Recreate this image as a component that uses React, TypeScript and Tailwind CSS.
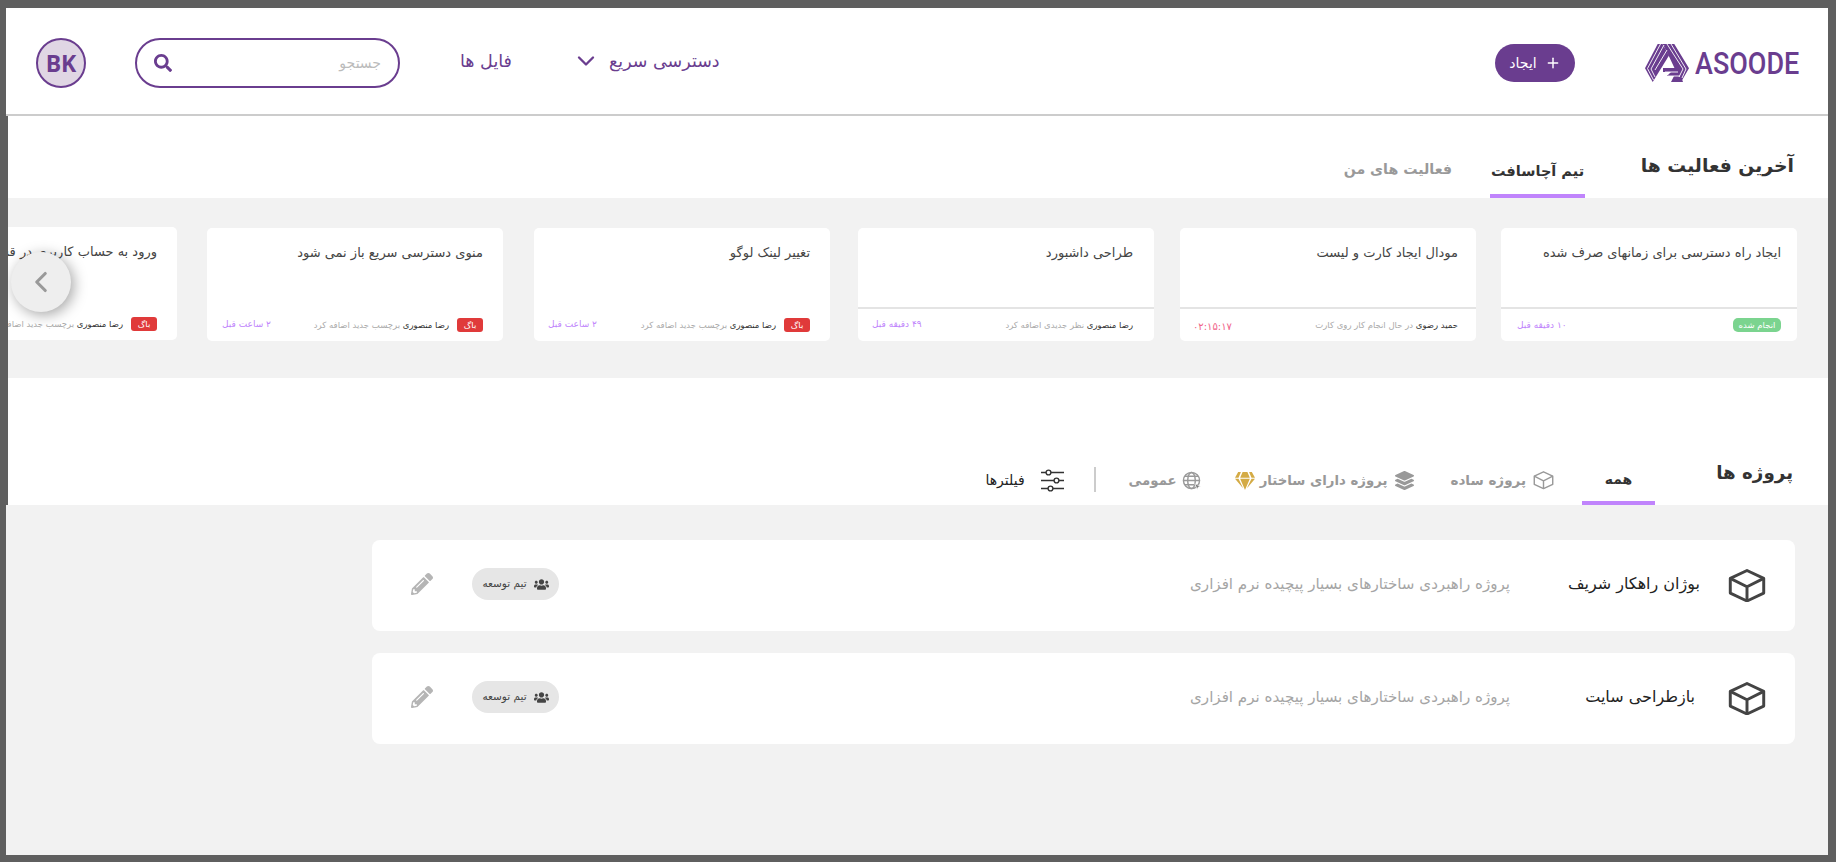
import { FaSearch, FaPencilAlt, FaUsers, FaLayerGroup, FaGem } from "react-icons/fa";
import { ChevronDown, ChevronLeft, Plus } from "lucide-react";

function Logo() {
  return (
    <svg width="44" height="38" viewBox="0 0 44 38" className="shrink-0">
      <path d="M12.7 0H17.5L24 11.5L7.7 38L0 24.3Z" fill="#6a3d8f" />
      <path d="M17.7 0H29.3L44 24.3L36 38L24.3 13Z" fill="#6a3d8f" />
      <path d="M18 24H33L38 38H26L29 32H22L26 28H18Z" fill="#6a3d8f" />
      <g stroke="#fff" strokeWidth="0.9" fill="none">
        <path d="M15.5 0L2.5 24.5L8.5 36" />
        <path d="M19 1L6 25L10 33" />
        <path d="M22 6L10 26" />
        <path d="M22 0L38 25L34 33" />
        <path d="M26 0L41 25L37 34" />
        <path d="M20 28H33M23 32H35" />
      </g>
    </svg>
  );
}

function Cube({ size, color, stroke }: { size: number; color: string; stroke: number }) {
  return (
    <svg width={size} height={size * 0.88} viewBox="0 0 38 34" fill="none" stroke={color} strokeWidth={stroke} strokeLinejoin="round" className="shrink-0">
      <path d="M19 1.5L36 9.5V24.5L19 32.5L2 24.5V9.5Z" />
      <path d="M2 9.5L19 18L36 9.5M19 18V32.5" />
    </svg>
  );
}

function GlobeIcon() {
  return (
    <svg width="19" height="19" viewBox="0 0 20 20" fill="none" stroke="#999" strokeWidth="1.5" className="shrink-0">
      <circle cx="10" cy="10" r="8.5" />
      <ellipse cx="10" cy="10" rx="4" ry="8.5" />
      <path d="M1.5 10H18.5M3 5.5H17M3 14.5H17" />
      <path d="M13.5 13.5L19.5 16L17 17L16 19.5Z" fill="#777" stroke="#fff" strokeWidth="0.7" />
    </svg>
  );
}

function FilterIcon() {
  return (
    <svg width="23" height="23" viewBox="0 0 23 23" fill="none" stroke="#333" strokeWidth="1.4" className="shrink-0">
      <path d="M0 3.5H5M10 3.5H23M0 11.5H13M18 11.5H23M0 19.5H7M12 19.5H23" />
      <circle cx="7.5" cy="3.5" r="2.4" />
      <circle cx="15.5" cy="11.5" r="2.4" />
      <circle cx="9.5" cy="19.5" r="2.4" />
    </svg>
  );
}

type Card = {
  title: string;
  author: string;
  action: string;
  time: string;
  timeClass: string;
  badge?: string;
  badgeClass?: string;
  line: boolean;
  outer: string;
  pad: string;
};

const cards: Card[] = [
  { title: "ایجاد راه دسترسی برای زمانهای صرف شده", author: "", action: "", time: "۱۰ دقیقه قبل", timeClass: "text-[#c084fc] text-[9px] pt-[2px]", badge: "انجام شده", badgeClass: "bg-[#7bd48f] w-[48px] rounded-[5px]", line: true, outer: "", pad: "pr-[16px] pl-[16px]" },
  { title: "مودال ایجاد کارت و لیست", author: "حمید رضوی", action: "در حال انجام کار روی کارت", time: "۰۲:۱۵:۱۷", timeClass: "text-[#f0648a] text-[10px] pt-[2px]", line: true, outer: "mr-[25px]", pad: "pr-[18px] pl-[13px]" },
  { title: "طراحی داشبورد", author: "رضا منصوری", action: "نظر جدیدی اضافه کرد", time: "۴۹ دقیقه قبل", timeClass: "text-[#c084fc] text-[9px]", line: true, outer: "mr-[26px]", pad: "pr-[21px] pl-[14px]" },
  { title: "تغییر لینک لوگو", author: "رضا منصوری", action: "برچسب جدید اضافه کرد", time: "۲ ساعت قبل", timeClass: "text-[#c084fc] text-[9px]", badge: "باگ", badgeClass: "bg-[#e03a3a] w-[26px] rounded-[3px]", line: false, outer: "mr-[28px]", pad: "pr-[20px] pl-[14px]" },
  { title: "منوی دسترسی سریع باز نمی شود", author: "رضا منصوری", action: "برچسب جدید اضافه کرد", time: "۲ ساعت قبل", timeClass: "text-[#c084fc] text-[9px]", badge: "باگ", badgeClass: "bg-[#e03a3a] w-[26px] rounded-[3px]", line: false, outer: "mr-[31px]", pad: "pr-[20px] pl-[15px]" },
  { title: "ورود به حساب کاربری در قسمت مدیریت", author: "رضا منصوری", action: "برچسب جدید اضافه کرد", time: "۲ ساعت قبل", timeClass: "text-[#c084fc] text-[9px]", badge: "باگ", badgeClass: "bg-[#e03a3a] w-[26px] rounded-[3px]", line: false, outer: "mr-[30px] -mt-px", pad: "pr-[20px] pl-[15px]" },
];

function ActivityCard({ c }: { c: Card }) {
  return (
    <div className={`shrink-0 w-[296px] h-[113px] bg-white rounded-[5px] flex flex-col ${c.outer}`}>
      <div className={`h-[79px] pt-[14px] text-[13px] leading-[22px] text-[#444] whitespace-nowrap overflow-hidden ${c.pad}`}>
        {c.title}
      </div>
      <div className={`h-[2px] ${c.line ? "bg-[#e4e4e4]" : "bg-white"}`} />
      <div className={`flex-1 flex items-center justify-between text-[8.5px] whitespace-nowrap overflow-hidden ${c.pad}`}>
        <div className="flex items-center gap-[8px]">
          {c.badge && (
            <span className={`h-[14px] text-white flex items-center justify-center ${c.badgeClass}`}>{c.badge}</span>
          )}
          {c.author && (
            <span className="text-[#aaa]">
              <span className="text-[#333]">{c.author}</span> {c.action}
            </span>
          )}
        </div>
        <span className={c.timeClass}>{c.time}</span>
      </div>
    </div>
  );
}

const projects = [
  { title: "بوژان راهکار شریف", w: "w-[152px]" },
  { title: "بازطراحی سایت", w: "w-[152px] pr-[5px]" },
];

function ProjectRow({ title, w }: { title: string; w: string }) {
  return (
    <div className="h-[91px] bg-white rounded-[8px] flex items-center pr-[29px] pb-[3px]">
      <div className="mt-[3px] flex">
        <Cube size={38} color="#444" stroke={3} />
      </div>
      <div className={`${w} mr-[28px] text-[16px] text-[#222] whitespace-nowrap`}>{title}</div>
      <div className="mr-[38px] w-[320px] text-[15.1px] text-[#a5a5a5] whitespace-nowrap">پروژه راهبردی ساختارهای بسیار پیچیده نرم افزاری</div>
      <div className="mr-[631px] w-[87px] h-[32px] rounded-full bg-[#e6e6e6] flex items-center justify-center gap-[7px] text-[10.5px] text-[#444]">
        <FaUsers size={15} color="#444" />
        <span>تیم توسعه</span>
      </div>
      <div className="mr-[39px]">
        <FaPencilAlt size={22} color="#b5b5b5" />
      </div>
    </div>
  );
}

export default function App() {
  return (
    <div dir="rtl" className="h-[862px] bg-[#5f5f5f] pt-[8px] pb-[7px] pl-[6px] pr-[8px] flex flex-col font-['DejaVu_Sans',sans-serif] overflow-hidden">
      <header className="h-[108px] shrink-0 bg-white border-b-2 border-[#cccccc] flex items-center pr-[29px] text-[#6a3d8f]">
        <div dir="ltr" className="flex items-center gap-[6px] w-[154px] mt-[4px]">
          <Logo />
          <span className="font-['Roboto',sans-serif] font-medium text-[31px] leading-none scale-x-[0.87] origin-left whitespace-nowrap">ASOODE</span>
        </div>
        <button className="mr-[70px] w-[80px] h-[38px] rounded-full bg-[#6a3d8f] text-white text-[14px] flex items-center justify-center gap-[8px] mt-[4px]">
          <Plus size={16} strokeWidth={2.2} />
          <span>ایجاد</span>
        </button>
        <div className="flex-1" />
        <div className="flex items-center gap-[9px] text-[17.5px]">
          <span>دسترسی سریع</span>
          <ChevronDown size={28} strokeWidth={2} />
        </div>
        <div className="mr-[60px] text-[17.5px]">فایل ها</div>
        <div className="mr-[60px] w-[265px] h-[50px] rounded-full border-2 border-[#6a3d8f] flex items-center justify-between pr-[17px] pl-[17px] mt-[4px]">
          <span className="text-[14px] text-[#bbbbbb]">جستجو</span>
          <FaSearch size={18} />
        </div>
        <div className="mr-[49px] ml-[30px] w-[50px] h-[50px] rounded-full border-2 border-[#6a3d8f] bg-[#e0d6e4] flex items-center justify-center font-['Open_Sans',sans-serif] font-bold text-[23px] mt-[4px]">BK</div>
      </header>

      <section className="h-[82px] shrink-0 ml-[2px] bg-white flex items-stretch pr-[34px]">
        <h2 className="text-[18.8px] font-bold text-[#333] w-[151px] pt-[36px] whitespace-nowrap">آخرین فعالیت ها</h2>
        <div className="mr-[58px] w-[95px] border-b-4 border-[#c084fc] text-center pt-[45px] text-[14.5px] font-bold text-[#333] whitespace-nowrap">تیم آچاسافت</div>
        <div className="mr-[38px] pt-[43px] text-[14.2px] font-bold text-[#999] whitespace-nowrap">فعالیت های من</div>
      </section>

      <section className="relative h-[180px] shrink-0 ml-[2px] bg-[#f2f2f2] overflow-hidden flex pt-[30px] pr-[31px]">
        {cards.map((c) => (
          <ActivityCard key={c.title} c={c} />
        ))}
        <button className="absolute left-[3px] top-[54px] w-[60px] h-[60px] rounded-full bg-[#eeeeee] shadow-[3px_3px_14px_rgba(0,0,0,0.35)] flex items-center justify-center">
          <ChevronLeft size={34} color="#999" strokeWidth={2.2} />
        </button>
      </section>

      <section className="h-[127px] shrink-0 ml-[2px] bg-white flex items-end pr-[35px] whitespace-nowrap">
        <h2 className="text-[18.3px] font-bold text-[#333] w-[75px] mb-[19px]">پروژه ها</h2>
        <div className="mr-[63px] w-[73px] h-[36px] border-b-4 border-[#c084fc] text-center text-[14px] font-bold text-[#333]">همه</div>
        <div className="mr-[28px] flex items-center gap-[7px] h-[36px] text-[13.5px] font-bold text-[#999] pb-[13px]">
          <Cube size={21} color="#999" stroke={2.6} />
          <span>پروژه ساده</span>
        </div>
        <div className="mr-[36px] flex items-center gap-[8px] h-[36px] text-[13.3px] font-bold text-[#999] pb-[13px]">
          <FaLayerGroup size={19} color="#999" />
          <span>پروژه دارای ساختار</span>
          <FaGem size={20} color="#d4ab45" className="-mr-[3px]" />
        </div>
        <div className="mr-[34px] flex items-center gap-[5px] h-[36px] text-[13.3px] font-bold text-[#999] pb-[13px]">
          <GlobeIcon />
          <span>عمومی</span>
        </div>
        <div className="mr-[33px] w-[2px] h-[25px] bg-[#cccccc] mb-[13px]" />
        <div className="mr-[30px] flex items-center gap-[16px] h-[36px] text-[14px] text-[#222] pb-[14px]">
          <FilterIcon />
          <span>فیلترها</span>
        </div>
      </section>

      <main className="flex-1 bg-[#f2f2f2] pt-[35px] pr-[33px] pl-[366px] flex flex-col gap-[22px]">
        {projects.map((p) => (
          <ProjectRow key={p.title} title={p.title} w={p.w} />
        ))}
      </main>
    </div>
  );
}
